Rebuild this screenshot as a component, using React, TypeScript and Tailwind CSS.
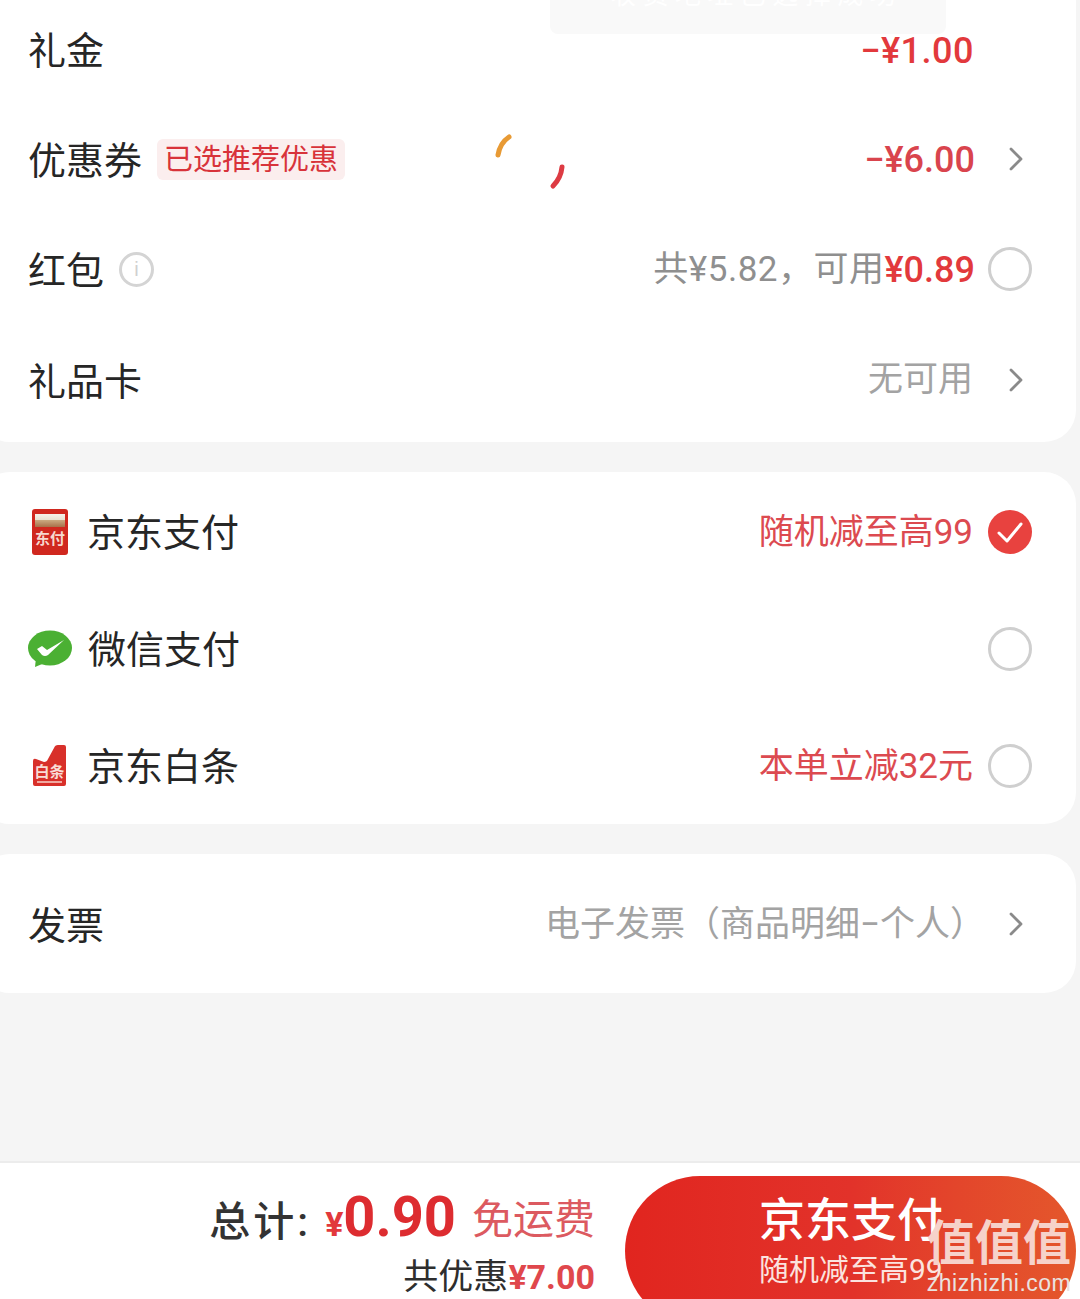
import React from "react";

const font = { fontFamily: 'Roboto, "Noto Sans CJK SC", sans-serif' };

function Chevron({ ml = "ml-[36px]" }: { ml?: string }) {
  return (
    <svg width="14" height="24" viewBox="0 0 14 24" className={`${ml} mr-[13px] shrink-0`} fill="none">
      <path d="M2 2 L12 12 L2 22" stroke="#8a8a8a" strokeWidth="2.8" strokeLinecap="round" strokeLinejoin="round" />
    </svg>
  );
}

function Radio() {
  return <span className="ml-[15px] mr-[4px] block h-[44px] w-[44px] shrink-0 rounded-full border-[3px] border-[#cfcfcf]" />;
}

function Checked() {
  return (
    <svg width="44" height="44" viewBox="0 0 44 44" className="ml-[15px] mr-[4px] shrink-0">
      <circle cx="22" cy="22" r="22" fill="#e8423f" />
      <path d="M11 23 L19 31 L33 14" fill="none" stroke="#fff" strokeWidth="3" strokeLinecap="round" strokeLinejoin="round" />
    </svg>
  );
}

function JdPayIcon() {
  return (
    <svg width="36" height="46" viewBox="0 0 36 46" className="shrink-0">
      <rect width="36" height="46" rx="3" fill="#d0281f" />
      <defs>
        <linearGradient id="jdp" x1="0" y1="0" x2="0" y2="1">
          <stop offset="0" stopColor="#f7f2ea" />
          <stop offset="0.45" stopColor="#e8e2d2" />
          <stop offset="0.5" stopColor="#c9a67e" />
          <stop offset="1" stopColor="#a8704a" />
        </linearGradient>
      </defs>
      <rect x="3" y="5" width="30" height="13" fill="url(#jdp)" />
      <text x="18" y="35" textAnchor="middle" fontSize="15" fontWeight="700" fill="#f6d9cf" style={font}>东付</text>
    </svg>
  );
}

function WechatIcon() {
  return (
    <svg width="46" height="38" viewBox="0 0 46 38" className="shrink-0">
      <ellipse cx="23" cy="18" rx="22" ry="17.5" fill="#4bb033" />
      <path d="M9 28 L8 37 L20 32 Z" fill="#4bb033" />
      <path d="M10 19 L15 16 L20 20 L37 10 L21 25 Q18 27 15 25 Z" fill="#fff" />
    </svg>
  );
}

function BaitiaoIcon() {
  return (
    <svg width="34" height="42" viewBox="0 0 34 42" className="shrink-0">
      <path d="M0 16 Q0 13 3 14 L11 17 Q14 17 15 14 L21 3 Q22 0 25 0 L31 0 Q33 0 33 2 L33 39 Q33 41 31 41 L2 41 Q0 41 0 39 Z" fill="#d8302a" />
      <text x="16.5" y="32" textAnchor="middle" fontSize="15" fontWeight="700" fill="#f9dcd6" style={font}>白条</text>
      <rect x="4" y="36" width="25" height="2" fill="#f0a8a0" />
    </svg>
  );
}

function InfoIcon() {
  return (
    <span className="ml-[15px] flex h-[35px] w-[35px] items-center justify-center rounded-full border-[3px] border-[#d4d4d4] text-[20px] leading-none text-[#d0d0d0]" style={{ fontFamily: '"Liberation Sans", sans-serif' }}>
      i
    </span>
  );
}

function Row({ h, children }: { h: string; children: React.ReactNode }) {
  return <div className={`flex items-center justify-between pl-[50px] pr-[40px] ${h}`}>{children}</div>;
}

const label = "pt-[4px] text-[38px] leading-[44px] text-[#262626] whitespace-nowrap";
const payLabel = "ml-[17px] pt-[3px] text-[38px] leading-[44px] text-[#262626] whitespace-nowrap";
const amount = "pt-[1px] text-[36px] font-medium leading-[44px] whitespace-nowrap";
const promo = "pt-[2px] text-[35px] leading-[44px] text-[#dc4a50] whitespace-nowrap";

export default function App() {
  return (
    <div className="relative flex h-[1299px] w-[1080px] flex-col overflow-hidden bg-[#f5f5f5]" style={font}>
      <div className="ml-[-22px] mr-[4px] mt-[-6px] rounded-b-[32px] bg-white pb-[6px]">
        <Row h="h-[110px]">
          <span className={label}>礼金</span>
          <span className={`mr-[62px] mt-[3px] tracking-[0.5px] text-[#e2393c] ${amount}`}>−¥1.00</span>
        </Row>
        <Row h="h-[110px]">
          <div className="flex items-center">
            <span className={label}>优惠券</span>
            <span className="ml-[15px] rounded-[6px] bg-[#fbeeee] px-[7px] pt-[2px] text-[29px] leading-[39px] text-[#d8333a] whitespace-nowrap">已选推荐优惠</span>
          </div>
          <div className="flex items-center">
            <span className={`text-[#d9444d] ${amount}`}>−¥6.00</span>
            <Chevron ml="ml-[34px]" />
          </div>
        </Row>
        <Row h="h-[110px]">
          <div className="flex items-center">
            <span className={label}>红包</span>
            <InfoIcon />
          </div>
          <div className="flex items-center">
            <span className="pt-[2px] text-[35px] leading-[44px] tracking-[0.5px] text-[#8f8f8f] whitespace-nowrap">共¥5.82，可用</span>
            <span className={`mr-[-2px] text-[#e2393c] ${amount}`}>¥0.89</span>
            <Radio />
          </div>
        </Row>
        <Row h="h-[112px]">
          <span className={label}>礼品卡</span>
          <div className="flex items-center">
            <span className="text-[35px] leading-[44px] text-[#a3a3a3] whitespace-nowrap">无可用</span>
            <Chevron />
          </div>
        </Row>
      </div>

      <div className="ml-[-22px] mr-[4px] mt-[30px] flex h-[352px] flex-col rounded-[32px] bg-white pt-[1px]">
        <Row h="h-[117px]">
          <div className="flex items-center">
            <span className="ml-[4px] mr-[2px] flex"><JdPayIcon /></span>
            <span className={payLabel}>京东支付</span>
          </div>
          <div className="flex items-center">
            <span className={promo}>随机减至高99</span>
            <Checked />
          </div>
        </Row>
        <Row h="h-[117px]">
          <div className="flex items-center">
            <span className="ml-[-1px] mr-[-2px] flex"><WechatIcon /></span>
            <span className={payLabel}>微信支付</span>
          </div>
          <Radio />
        </Row>
        <Row h="h-[117px]">
          <div className="flex items-center">
            <span className="ml-[5px] mr-[3px] flex"><BaitiaoIcon /></span>
            <span className={payLabel}>京东白条</span>
          </div>
          <div className="flex items-center">
            <span className={promo}>本单立减32元</span>
            <Radio />
          </div>
        </Row>
      </div>

      <div className="ml-[-22px] mr-[4px] mt-[30px] rounded-[32px] bg-white">
        <Row h="h-[139px]">
          <span className={label}>发票</span>
          <div className="flex items-center">
            <span className="mr-[-12px] pt-[2px] text-[35px] leading-[44px] text-[#a3a3a3] whitespace-nowrap">电子发票（商品明细−个人）</span>
            <Chevron />
          </div>
        </Row>
      </div>

      <div className="mt-auto flex h-[138px] items-start justify-end border-t-2 border-[#ececec] bg-white pr-[4px]">
        <div className="mr-[30px] flex flex-col items-end">
          <div className="mt-[21px] flex items-baseline whitespace-nowrap">
            <span className="text-[41px] font-medium leading-[66px] tracking-[3px] text-[#333]">总计:</span>
            <span className="ml-[14px] text-[34px] font-bold leading-[66px] text-[#e2393c]">¥</span>
            <span className="text-[56px] font-bold leading-[66px] text-[#dd2c30]">0.90</span>
            <span className="ml-[16px] -translate-y-[2px] text-[41px] leading-[66px] text-[#dc5a60]">免运费</span>
          </div>
          <div className="mt-[-2px] flex items-baseline whitespace-nowrap">
            <span className="text-[35px] leading-[44px] text-[#2e2e2e]">共优惠</span>
            <span className="text-[34px] font-bold leading-[44px] text-[#e0474c]">¥7.00</span>
          </div>
        </div>
        <div className="mt-[13px] flex h-[150px] w-[451px] shrink-0 flex-col rounded-[75px] bg-gradient-to-r from-[#e1251f] via-[#e2322a] to-[#e4572c] pl-[134px] pt-[16px] text-white">
          <span className="text-[46px] font-medium leading-[56px] whitespace-nowrap">京东支付</span>
          <span className="text-[30px] leading-[44px] text-[#fbe3df] whitespace-nowrap">随机减至高99</span>
        </div>
      </div>

      {/* faint toast behind the top edge */}
      <div className="absolute left-[550px] top-0 h-[34px] w-[396px] overflow-hidden rounded-b-[8px] bg-[#f9f9f9]">
        <span className="absolute left-[60px] top-[-24px] text-[26px] text-[#ffffff] whitespace-nowrap">收 货 地 址 已 选 择 成 功</span>
      </div>

      {/* spinner strokes */}
      <svg className="absolute left-[490px] top-[130px]" width="80" height="62" viewBox="0 0 80 62" fill="none">
        <path d="M8 25 Q10 13 19 7" stroke="#e89a34" strokeWidth="5" strokeLinecap="round" />
        <path d="M72 37 Q71 48 63 56" stroke="#dd3b43" strokeWidth="5" strokeLinecap="round" />
      </svg>

      {/* watermark */}
      <div className="absolute left-[927px] top-[1216px] flex w-[144px] flex-col items-center">
        <span className="text-[48px] font-bold leading-[56px] whitespace-nowrap text-[#f6d2ca]">值值值</span>
        <span className="mt-[-2px] text-[23px] leading-[26px] tracking-[0.5px] whitespace-nowrap text-[#e9e2e0]" style={{ fontFamily: '"Liberation Sans", sans-serif' }}>zhizhizhi.com</span>
      </div>
    </div>
  );
}
